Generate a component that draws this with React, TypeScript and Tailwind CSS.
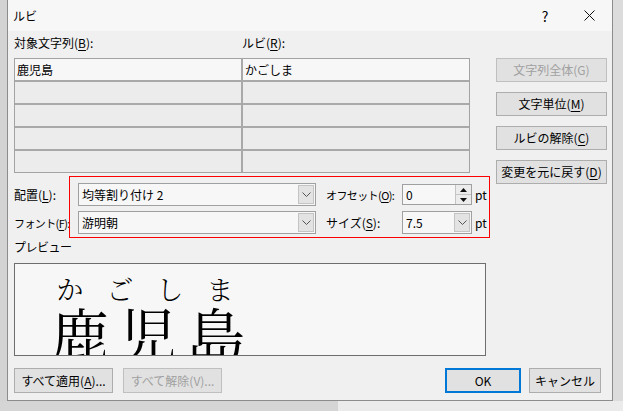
import React from 'react';

function U({ children }: { children: React.ReactNode }) {
  return <span className="underline underline-offset-[2px]">{children}</span>;
}

function Chevron() {
  return (
    <svg width="9" height="5" viewBox="0 0 9 5" fill="none" stroke="#555" strokeWidth="1">
      <path d="M0.5 0.5 L4.5 4.5 L8.5 0.5" />
    </svg>
  );
}

function Combo({ value, width }: { value: string; width: string }) {
  return (
    <div className={`${width} h-[23px] border border-[#a0a0a0] bg-[#f7f7f7] flex`}>
      <div className="flex-1 pl-[3px] flex items-center whitespace-nowrap">{value}</div>
      <div className="w-[16px] m-[1px] bg-[#e3e3e3] border border-[#c4c4c4] flex items-center justify-center">
        <Chevron />
      </div>
    </div>
  );
}

function Spin({ value }: { value: string }) {
  return (
    <div className="w-[70px] h-[21px] border border-[#a0a0a0] bg-[#f7f7f7] flex">
      <div className="flex-1 pl-[3px] flex items-center">{value}</div>
      <div className="w-[16px] flex flex-col border-l border-[#c4c4c4] bg-[#ececec]">
        <div className="flex-1 flex items-center justify-center border-b border-[#c4c4c4]">
          <svg width="7" height="4" viewBox="0 0 7 4"><path d="M0 4 L3.5 0 L7 4 Z" fill="#111" /></svg>
        </div>
        <div className="flex-1 flex items-center justify-center">
          <svg width="7" height="4" viewBox="0 0 7 4"><path d="M0 0 L3.5 4 L7 0 Z" fill="#111" /></svg>
        </div>
      </div>
    </div>
  );
}

function Btn({ children, width, disabled, primary }: { children: React.ReactNode; width: string; disabled?: boolean; primary?: boolean }) {
  return (
    <div
      className={`${width} h-full flex items-center justify-center whitespace-nowrap bg-[#e1e1e1] ${
        primary ? 'border-2 border-[#0078d7]' : disabled ? 'border border-[#bfbfbf] text-[#a0a0a0]' : 'border border-[#adadad]'
      }`}
    >
      {children}
    </div>
  );
}

const ROWS = [
  ['鹿児島', 'かごしま'],
  ['', ''],
  ['', ''],
  ['', ''],
  ['', ''],
];

export default function App() {
  return (
    <div className="w-[623px] h-[411px] overflow-hidden flex flex-col bg-[#d6d6d6] text-[12px] leading-[16px] text-black font-['Noto_Sans_CJK_JP','Noto_Sans',sans-serif]">
      <div className="flex h-[401px]">
        <div className="w-[7px] bg-[#d3d3d3]" />

        {/* dialog */}
        <div className="w-[606px] flex flex-col border-x border-b border-[#8c8c8c] bg-[#f0f0f0]">
          <div className="h-[31px] bg-[#f7f7f7] flex items-center pl-[5px]">
            <span>ルビ</span>
            <div className="ml-auto w-[46px] h-full flex items-center justify-center text-[14px] pl-[4px]">?</div>
            <div className="w-[46px] h-full flex items-center justify-center">
              <svg width="11" height="11" viewBox="0 0 11 11" stroke="#111" strokeWidth="1">
                <path d="M0.5 0.5 L10.5 10.5 M10.5 0.5 L0.5 10.5" />
              </svg>
            </div>
          </div>

          <div className="flex-1 px-[6px] flex flex-col">
            <div className="flex pt-[4px]">
              {/* left column */}
              <div className="w-[476px] flex flex-col">
                <div className="h-[16px] flex whitespace-nowrap">
                  <span className="w-[228px]">対象文字列(<U>B</U>):</span>
                  <span>ルビ(<U>R</U>):</span>
                </div>

                <div className="mt-[7px] w-[456px] border border-[#a3a3a3] bg-[#a9a9a9] grid grid-cols-[226px_226px] gap-[2px]">
                  {ROWS.map((r, i) =>
                    r.map((c, j) => (
                      <div
                        key={`${i}-${j}`}
                        className={`h-[21px] flex items-center pl-[2px] ${i === 0 ? 'bg-[#f7f7f7]' : 'bg-[#ececec]'}`}
                      >
                        {c}
                      </div>
                    ))
                  )}
                </div>

                <div className="mt-[3px] flex">
                  <div className="w-[55px] pt-[7px] flex flex-col gap-[5px] whitespace-nowrap">
                    <div className="h-[23px] flex items-center">配置(<U>L</U>):</div>
                    <div className="h-[23px] flex items-center text-[11px] tracking-[-0.6px]">フォント(<U>F</U>):</div>
                  </div>
                  <div className="w-[421px] h-[62px] border border-[#ff0000] pt-[6px] pl-[8px] flex flex-col gap-[5px]">
                    <div className="h-[23px] flex items-center">
                      <Combo value="均等割り付け 2" width="w-[238px]" />
                      <span className="ml-[10px] w-[76px] whitespace-nowrap text-[11px] tracking-[-0.6px]">オフセット(<U>O</U>):</span>
                      <Spin value="0" />
                      <span className="ml-[3px]">pt</span>
                    </div>
                    <div className="h-[23px] flex items-center">
                      <Combo value="游明朝" width="w-[238px]" />
                      <span className="ml-[10px] w-[76px] whitespace-nowrap">サイズ(<U>S</U>):</span>
                      <Combo value="7.5" width="w-[70px]" />
                      <span className="ml-[3px]">pt</span>
                    </div>
                  </div>
                </div>

                <div className="h-[16px] mt-[1px] tracking-[-0.5px]">プレビュー</div>

                <div className="mt-[8px] w-[472px] h-[93px] border border-[#6e6e6e] bg-[#f7f7f7] overflow-hidden font-['Noto_Serif_CJK_JP','Noto_Sans_CJK_JP',serif]">
                  <div className="flex pl-[30px] pt-[11px] h-[39px] text-[27px] leading-[28px] font-light">
                    {['か', 'ご', 'し', 'ま'].map((k) => (
                      <div key={k} className="w-[50px] text-center">{k}</div>
                    ))}
                  </div>
                  <div className="flex pl-[36px] text-[58px] leading-[58px]">
                    {['鹿', '児', '島'].map((k) => (
                      <div key={k} className="w-[68px]">{k}</div>
                    ))}
                  </div>
                </div>
              </div>

              {/* right buttons */}
              <div className="ml-[6px] mt-[23px] flex flex-col gap-[10px]">
                <div className="h-[24px]"><Btn width="w-[111px]" disabled>文字列全体(G)</Btn></div>
                <div className="h-[24px]"><Btn width="w-[111px]">文字単位(<U>M</U>)</Btn></div>
                <div className="h-[24px]"><Btn width="w-[111px]">ルビの解除(<U>C</U>)</Btn></div>
                <div className="h-[24px]"><Btn width="w-[111px]">変更を元に戻す(<U>D</U>)</Btn></div>
              </div>
            </div>

            <div className="mt-[12px] h-[25px] flex">
              <Btn width="w-[99px]">すべて適用(<U>A</U>)...</Btn>
              <div className="ml-[10px] h-full"><Btn width="w-[99px]" disabled>すべて解除(V)...</Btn></div>
              <div className="ml-auto h-full"><Btn width="w-[76px]" primary>OK</Btn></div>
              <div className="ml-[8px] mr-[5px] h-full"><Btn width="w-[72px]">キャンセル</Btn></div>
            </div>
          </div>
        </div>

        <div className="flex-1 bg-[#dcdcdc]" />
      </div>
      <div className="flex-1 flex">
        <div className="w-[338px] bg-[#d5d5d5]" />
        <div className="flex-1 bg-[#ebebeb]" />
      </div>
    </div>
  );
}
